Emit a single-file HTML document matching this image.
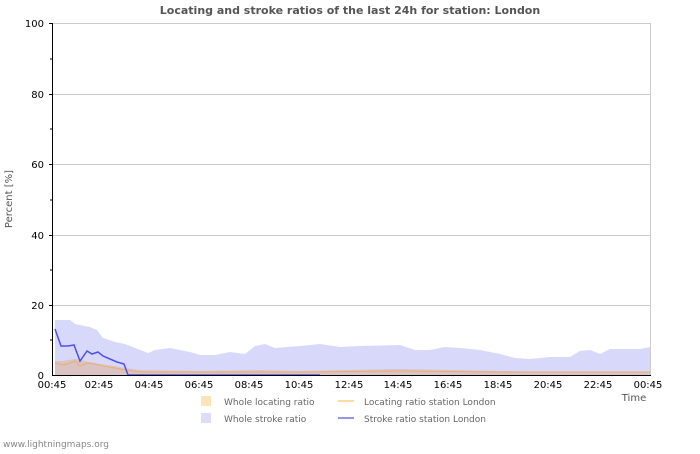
<!DOCTYPE html>
<html><head><style>
body{margin:0;background:#fff;width:700px;height:450px;overflow:hidden;font-family:"DejaVu Sans","Liberation Sans",sans-serif}
</style></head><body>
<svg width="700" height="450" xmlns="http://www.w3.org/2000/svg" font-family="DejaVu Sans, Liberation Sans, sans-serif">
<text x="350" y="14" text-anchor="middle" font-size="11" font-weight="bold" fill="#555">Locating and stroke ratios of the last 24h for station: London</text>
<g stroke="#ccc" stroke-width="1">
<line x1="52" y1="23.5" x2="651" y2="23.5"/><line x1="52" y1="94.5" x2="651" y2="94.5"/><line x1="52" y1="164.5" x2="651" y2="164.5"/><line x1="52" y1="235.5" x2="651" y2="235.5"/><line x1="52" y1="305.5" x2="651" y2="305.5"/>
<line x1="650.5" y1="23" x2="650.5" y2="375"/>
</g>
<polygon fill="#d8d8fb" points="55,375 55,320 70,320 75,324 90,327 97,330 103,338 115,342 125,344 135,348 148,353 155,350 170,348 180,350 190,352 200,355 215,355 230,352 245,354 255,346 265,344 275,348 300,346 320,344 340,347 360,346 400,345 415,350 430,350 445,347 460,348 480,350 500,354 515,358 530,359 550,357 570,357 580,351 590,350 600,354 610,349 625,349 640,349 650,347 650,375"/>
<polygon fill="#dcc3c3" points="55,375 55,361 62,361 75,359 90,362 100,364 115,366 125,368 140,370 200,371 260,370 300,371 400,369 500,371 560,372 650,372 650,375"/>
<polyline fill="none" stroke="#e8b070" stroke-width="1" points="55,363 62,365 68,364 75,361 80,366 87,363 95,364 103,366 115,368 125,370 140,372 200,372 300,372 400,371 500,372 650,372"/>
<polyline fill="none" stroke="#5050f0" stroke-width="1.5" points="55,329 61,346 68,346 74,345 80,361 87,351 92,354 98,352 103,356 110,359 117,362 124,364 128,375 320,375"/>
<line x1="52.5" y1="23" x2="52.5" y2="375" stroke="#000"/>
<line x1="52" y1="375.5" x2="651" y2="375.5" stroke="#000"/>
<g stroke="#000">
<line x1="49" y1="23.5" x2="52" y2="23.5"/><line x1="49" y1="94.5" x2="52" y2="94.5"/><line x1="49" y1="164.5" x2="52" y2="164.5"/><line x1="49" y1="235.5" x2="52" y2="235.5"/><line x1="49" y1="305.5" x2="52" y2="305.5"/>
<line x1="50" y1="59" x2="52" y2="59"/><line x1="50" y1="129" x2="52" y2="129"/><line x1="50" y1="200" x2="52" y2="200"/><line x1="50" y1="270" x2="52" y2="270"/><line x1="50" y1="340" x2="52" y2="340"/>
</g>
<g font-size="10" fill="#000" text-anchor="end">
<text x="44" y="27">100</text><text x="44" y="98">80</text><text x="44" y="168">60</text><text x="44" y="239">40</text><text x="44" y="309">20</text><text x="44" y="379">0</text>
</g>
<g font-size="10" fill="#000" text-anchor="middle">
<text x="52" y="388">00:45</text><text x="99" y="388">02:45</text><text x="149" y="388">04:45</text><text x="199" y="388">06:45</text><text x="249" y="388">08:45</text><text x="299" y="388">10:45</text><text x="349" y="388">12:45</text><text x="398" y="388">14:45</text><text x="448" y="388">16:45</text><text x="498" y="388">18:45</text><text x="548" y="388">20:45</text><text x="598" y="388">22:45</text><text x="648" y="388">00:45</text>
</g>
<text x="634" y="401" font-size="10" fill="#555" text-anchor="middle">Time</text>
<text transform="translate(12,199) rotate(-90)" font-size="10" fill="#555" text-anchor="middle">Percent   [%]</text>
<rect x="201" y="396" width="10" height="10" fill="#fde3b8"/>
<rect x="201" y="413" width="10" height="10" fill="#dcdcfc"/>
<text x="224" y="405" font-size="9" fill="#666">Whole locating ratio</text>
<text x="224" y="422" font-size="9" fill="#666">Whole stroke ratio</text>
<line x1="338" y1="401" x2="354" y2="401" stroke="#fdd080" stroke-width="1.5"/>
<line x1="338" y1="418" x2="354" y2="418" stroke="#7070f0" stroke-width="1.5"/>
<text x="364" y="405" font-size="9" fill="#666">Locating ratio station London</text>
<text x="364" y="422" font-size="9" fill="#666">Stroke ratio station London</text>
<text x="3" y="447" font-size="9" fill="#888">www.lightningmaps.org</text>
</svg>
</body></html>
